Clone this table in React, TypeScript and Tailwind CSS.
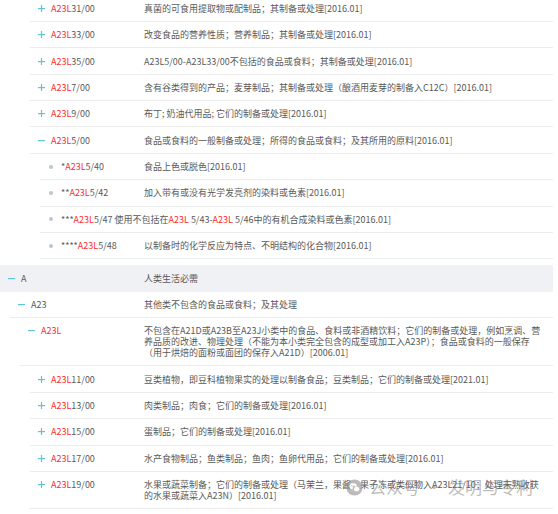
import React from "react";

type Level = 0 | 1 | 2 | 3 | 4;
type IconKind = "plus" | "minus" | "dot";

const ML: Record<Level, string> = {
  0: "ml-0",
  1: "ml-[10px]",
  2: "ml-[20px]",
  3: "ml-[30px]",
  4: "ml-[40px]",
};
const CW: Record<Level, string> = {
  0: "w-[144px]",
  1: "w-[134px]",
  2: "w-[124px]",
  3: "w-[114px]",
  4: "w-[104px]",
};

const R = ({ children }: { children: React.ReactNode }) => (
  <span className="text-[#fb2c2c]">{children}</span>
);

function Icon({ kind }: { kind: IconKind }) {
  if (kind === "dot")
    return <span className="block w-[4px] h-[4px] rounded-full bg-[#c4c4c4] ml-[1px]" />;
  return (
    <svg width="7" height="7" viewBox="0 0 7 7" className="block">
      <rect x="0" y="3" width="7" height="1.2" fill="#62c3d6" />
      {kind === "plus" && <rect x="2.9" y="0" width="1.2" height="7" fill="#62c3d6" />}
    </svg>
  );
}

function Row({
  level,
  icon,
  code,
  desc,
  gray,
  noBorder,
}: {
  level: Level;
  icon: IconKind;
  code: React.ReactNode;
  desc?: React.ReactNode;
  gray?: boolean;
  noBorder?: boolean;
}) {
  return (
    <div
      className={`flex py-[7.2px] leading-[11px] ${ML[level]} ${
        gray ? "bg-[#f0f1f4]" : ""
      } ${noBorder ? "border-b border-transparent" : "border-b border-[#ececec]"}`}
    >
      <div className={`flex shrink-0 pl-[8px] whitespace-nowrap ${CW[level]}`}>
        <span className="w-[13px] h-[11px] flex items-center shrink-0">
          <Icon kind={icon} />
        </span>
        <span>{code}</span>
      </div>
      <div className="flex-1 whitespace-nowrap">{desc}</div>
    </div>
  );
}

export default function App() {
  return (
    <div
      className="relative w-[558px] h-[514px] overflow-hidden bg-white text-[9px] text-[#595959]"
      style={{ fontFamily: '"Noto Sans CJK SC", "Noto Sans", sans-serif' }}
    >
      <div className="w-[553px] -mt-[4.4px]">
        <Row level={3} icon="plus" code={<><R>A23L</R>31/00</>} desc="真菌的可食用提取物或配制品；其制备或处理[2016.01]" />
        <Row level={3} icon="plus" code={<><R>A23L</R>33/00</>} desc="改变食品的营养性质；营养制品；其制备或处理[2016.01]" />
        <Row level={3} icon="plus" code={<><R>A23L</R>35/00</>} desc="A23L5/00-A23L33/00不包括的食品或食料；其制备或处理[2016.01]" />
        <Row level={3} icon="plus" code={<><R>A23L</R>7/00</>} desc="含有谷类得到的产品；麦芽制品；其制备或处理（酿酒用麦芽的制备入C12C）[2016.01]" />
        <Row level={3} icon="plus" code={<><R>A23L</R>9/00</>} desc="布丁; 奶油代用品; 它们的制备或处理[2016.01]" />
        <Row level={3} icon="minus" code={<><R>A23L</R>5/00</>} desc="食品或食料的一般制备或处理；所得的食品或食料；及其所用的原料[2016.01]" />
        <Row level={4} icon="dot" code={<>*<R>A23L</R>5/40</>} desc="食品上色或脱色[2016.01]" />
        <Row level={4} icon="dot" code={<>**<R>A23L</R>5/42</>} desc="加入带有或没有光学发亮剂的染料或色素[2016.01]" />
        <Row
          level={4}
          icon="dot"
          code={
            <>
              ***<R>A23L</R>5/47 使用不包括在<R>A23L</R> 5/43-<R>A23L</R> 5/46中的有机合成染料或色素[2016.01]
            </>
          }
        />
        <Row level={4} icon="dot" code={<>****<R>A23L</R>5/48</>} desc="以制备时的化学反应为特点、不明结构的化合物[2016.01]" />

        <div className="mt-[6px]">
          <Row level={0} icon="minus" code="A" desc="人类生活必需" gray noBorder />
          <Row level={1} icon="minus" code="A23" desc="其他类不包含的食品或食料；及其处理" />
          <Row
            level={2}
            icon="minus"
            code={<R>A23L</R>}
            desc={
              <>
                不包含在A21D或A23B至A23J小类中的食品、食料或非酒精饮料；它们的制备或处理，例如烹调、营
                <br />
                养品质的改进、物理处理（不能为本小类完全包含的成型或加工入A23P）；食品或食料的一般保存
                <br />
                （用于烘焙的面粉或面团的保存入A21D）[2006.01]
              </>
            }
          />
          <Row level={3} icon="plus" code={<><R>A23L</R>11/00</>} desc="豆类植物，即豆科植物果实的处理以制备食品；豆类制品；它们的制备或处理[2021.01]" />
          <Row level={3} icon="plus" code={<><R>A23L</R>13/00</>} desc="肉类制品；肉食；它们的制备或处理[2016.01]" />
          <Row level={3} icon="plus" code={<><R>A23L</R>15/00</>} desc="蛋制品；它们的制备或处理[2016.01]" />
          <Row level={3} icon="plus" code={<><R>A23L</R>17/00</>} desc="水产食物制品；鱼类制品；鱼肉；鱼卵代用品；它们的制备或处理[2016.01]" />
          <Row
            level={3}
            icon="plus"
            code={<><R>A23L</R>19/00</>}
            desc={
              <>
                水果或蔬菜制备；它们的制备或处理（马茉兰，果酱，果子冻或类似物入A23L21/10；处理未熟收获
                <br />
                的水果或蔬菜入A23N）[2016.01]
              </>
            }
          />
        </div>
      </div>

      {/* watermark */}
      <div className="absolute left-[346px] top-[477px] flex items-center text-[17px] leading-[20px] text-[#7a7a7a]/50 pointer-events-none">
        <svg width="17" height="17" viewBox="0 0 20 20" className="opacity-60 mr-[6px]">
          <circle cx="10" cy="10" r="9.5" fill="#8f8f8f" />
          <ellipse cx="8.3" cy="8.6" rx="4.6" ry="3.7" fill="#fff" />
          <ellipse cx="12.4" cy="11.8" rx="3.8" ry="3.1" fill="#fff" stroke="#8f8f8f" strokeWidth="0.8" />
          <circle cx="6.8" cy="7.8" r="0.7" fill="#8f8f8f" />
          <circle cx="9.6" cy="7.8" r="0.7" fill="#8f8f8f" />
        </svg>
        <span>公众号</span>
        <span className="w-[28px] text-center">·</span>
        <span>发明与专利</span>
      </div>
    </div>
  );
}
